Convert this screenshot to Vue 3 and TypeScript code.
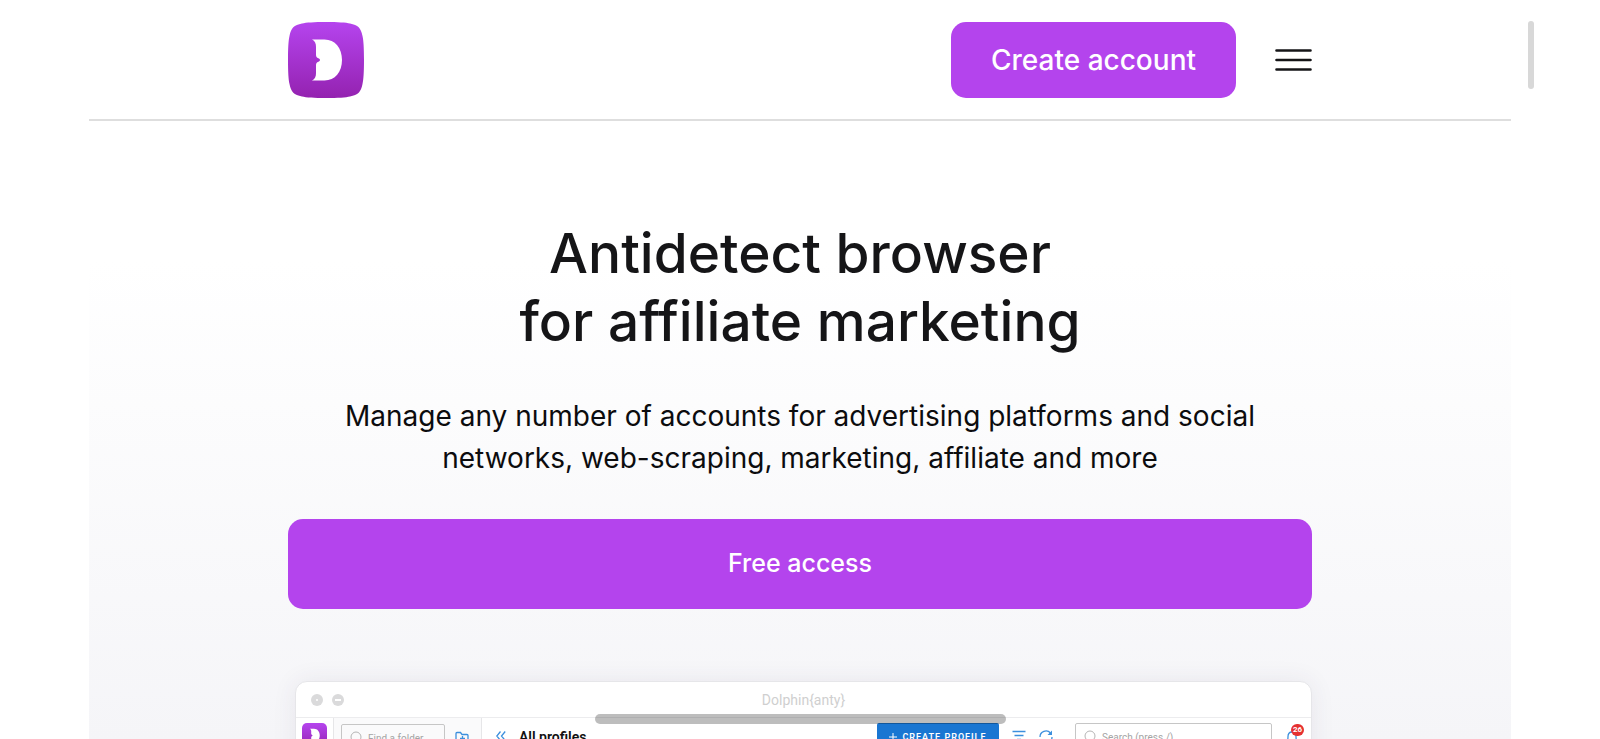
<script setup lang="ts">
const headingLines: string[] = ['Antidetect browser', 'for affiliate marketing']
const leadLines: string[] = [
  'Manage any number of accounts for advertising platforms and social',
  'networks, web-scraping, marketing, affiliate and more',
]
</script>

<template>
  <div class="page">
    <div class="sheet">
      <header class="header">
        <div class="container header-row">
          <a class="logo" href="#" aria-label="Dolphin Anty">
            <svg viewBox="0 0 76 76" aria-hidden="true">
              <defs>
                <linearGradient id="brand" x1="0" y1="0" x2="0" y2="1">
                  <stop offset="0" stop-color="#b544ee" />
                  <stop offset="1" stop-color="#9422b0" />
                </linearGradient>
              </defs>
              <path fill="url(#brand)" d="M38 0C50 0 58 .500 62 1.500C70 3 73 6 74.500 14C75.500 18 76 26 76 38S75.500 58 74.500 62C73 70 70 73 62 74.500C58 75.500 50 76 38 76S18 75.500 14 74.500C6 73 3 70 1.500 62C.500 58 0 50 0 38S.500 18 1.500 14C3 6 6 3 14 1.500C18 .500 26 0 38 0Z" />
              <path fill="#fff" d="M24 17.500H36.500C47 17.500 54 26 54 38S47 58.500 36.500 58.500H24C27 57 28 54.500 28 51V43C28 41 29 40.300 31 39.500Q33 38 31 36.500C29 35.700 28 35 28 33V25C28 21.500 27 19 24 17.500Z" />
            </svg>
          </a>
          <button class="create" type="button">Create account</button>
          <button class="burger" type="button" aria-label="Menu">
            <svg viewBox="0 0 37 24" aria-hidden="true">
              <path d="M1.500 2.500h34M1.500 12h34M1.500 21.500h34" />
            </svg>
          </button>
        </div>
      </header>

      <main class="hero">
        <div class="container">
          <h1><span v-for="line in headingLines" :key="line">{{ line }}</span></h1>
          <p class="lead"><span v-for="line in leadLines" :key="line">{{ line }}</span></p>
          <button class="free" type="button">Free access</button>

          <section class="app">
            <div class="titlebar">
              <svg class="dots" viewBox="0 0 34 12" aria-hidden="true">
                <circle cx="6" cy="6" r="6" />
                <circle cx="27" cy="6" r="6" />
                <circle class="cut" cx="6" cy="6" r="1" />
                <rect class="cut" x="24" y="5" width="6" height="2" />
              </svg>
              <span>Dolphin{anty}</span>
            </div>
            <div class="body">
              <div class="rail">
                <svg viewBox="0 0 76 76" aria-hidden="true">
                  <rect width="76" height="76" rx="15" fill="url(#brand)" />
                  <path fill="#fff" d="M24 17.500H36.500C47 17.500 54 26 54 38S47 58.500 36.500 58.500H24C27 57 28 54.500 28 51V43C28 41 29 40.300 31 39.500Q33 38 31 36.500C29 35.700 28 35 28 33V25C28 21.500 27 19 24 17.500Z" />
                </svg>
              </div>
              <div class="folders">
                <label class="field folder-field">
                  <svg viewBox="0 0 14 14" aria-hidden="true"><circle cx="6" cy="6" r="5" /><path d="M10 10l3 3" /></svg>
                  <input type="text" placeholder="Find a folder" aria-label="Find a folder" />
                </label>
                <svg class="blue folder-icon" viewBox="0 0 14 14" aria-hidden="true">
                  <path d="M1 11V2.500Q1 1.500 2 1.500H5.500L7 3.500H12Q13 3.500 13 4.500V11Q13 12 12 12H2Q1 12 1 11ZM5 7.500h5M7.500 5v5" />
                </svg>
              </div>
              <div class="toolbar">
                <svg class="blue chevrons" viewBox="0 0 10 10" aria-hidden="true"><path d="M4.500 .500L.800 5l3.700 4.500M9.200 .500L5.500 5l3.700 4.500" /></svg>
                <strong>All profiles</strong>
                <button class="profile" type="button">
                  <svg viewBox="0 0 8 8" aria-hidden="true"><path d="M4 0v8M0 4h8" /></svg>
                  CREATE PROFILE
                </button>
                <svg class="blue filter" viewBox="0 0 14 12" aria-hidden="true"><path d="M.500 1.500h13M2.500 5.500h9M5 9.500h4" /></svg>
                <svg class="blue refresh" viewBox="0 0 14 14" aria-hidden="true"><path d="M1 7A6 6 0 0 1 11.500 3M13 7A6 6 0 0 1 2.500 11" /><path class="tip" d="M13 .500V5H8.500ZM1 13.500V9H5.500Z" /></svg>
                <label class="field search-field">
                  <svg viewBox="0 0 14 14" aria-hidden="true"><circle cx="6" cy="6" r="5" /><path d="M10 10l3 3" /></svg>
                  <input type="text" placeholder="Search (press /)" aria-label="Search" />
                </label>
                <div class="bell">
                  <svg class="blue" viewBox="0 0 14 14" aria-hidden="true"><path d="M1 12.500Q3 11.500 3 6.500Q3 2 7 2T11 6.500Q11 11.500 13 12.500Z" /></svg>
                  <span class="badge">26</span>
                </div>
              </div>
            </div>
          </section>
        </div>
      </main>
    </div>
    <div class="thumb thumb-y"></div>
    <div class="thumb thumb-x"></div>
  </div>
</template>

<style>
body {
  margin: 0;
  background: #fff;
}
</style>

<style scoped>
.page {
  position: relative;
  height: 100vh;
  overflow: hidden;
  box-sizing: border-box;
  padding: 0 89px;
  background: #fff;
  color: #151517;
  font-family: Inter, "Liberation Sans", sans-serif;
}
.sheet {
  height: 100%;
  display: flex;
  flex-direction: column;
}
.container {
  max-width: 1024px;
  margin: 0 auto;
}
button {
  border: 0;
  padding: 0;
  font-family: inherit;
  cursor: pointer;
}
svg {
  display: block;
  flex: none;
}
.header {
  border-bottom: 2px solid #dedede;
  padding: 22px 0 21px;
}
.header-row {
  display: flex;
  align-items: center;
}
.logo {
  margin-right: auto;
}
.logo svg {
  width: 76px;
  height: 76px;
}
.create {
  height: 76px;
  padding: 0 40px;
  border-radius: 15px;
  background: #b444ed;
  color: #fff;
  font-size: 28px;
  font-weight: 500;
}
.burger {
  margin-left: 39px;
  background: none;
}
.burger svg {
  width: 37px;
  height: 24px;
  fill: none;
  stroke: #151517;
  stroke-width: 2.6;
  stroke-linecap: round;
}
.hero {
  flex: 1;
  min-height: 0;
  padding-top: 98px;
  background: linear-gradient(#fff 0, #fff 140px, #f5f5f8 100%);
}
h1 {
  margin: 0;
  text-align: center;
  font-size: 55px;
  line-height: 68px;
  font-weight: 500;
}
h1 span,
.lead span {
  display: block;
}
.lead {
  margin: 40px 0;
  text-align: center;
  font-size: 28px;
  line-height: 42px;
  color: #0c0c0e;
}
.free {
  display: block;
  width: 100%;
  height: 90px;
  padding-bottom: 2px;
  border-radius: 15px;
  background: #b444ed;
  color: #fff;
  font-size: 25px;
  font-weight: 500;
}
.app {
  margin: 72px 0 0 7px;
  height: 600px;
  border: 1px solid #e6e6e9;
  border-radius: 12px;
  overflow: hidden;
  background: #fff;
  box-shadow: 0 0 24px rgba(60, 50, 90, 0.08);
  font-family: Roboto, sans-serif;
}
.titlebar {
  display: grid;
  grid-template-columns: 1fr auto 1fr;
  align-items: center;
  height: 35px;
  padding: 0 15px;
  border-bottom: 1px solid #ececee;
  color: #cfcfcf;
  font-size: 14px;
}
.dots {
  width: 34px;
  height: 12px;
  fill: #dadadb;
}
.cut {
  fill: #fff;
}
.body {
  display: flex;
  height: 100%;
}
.rail {
  padding: 5px 6px;
  border-right: 1px solid #e6e6e8;
}
.rail svg {
  width: 25px;
  height: 25px;
}
.folders {
  display: flex;
  align-items: flex-start;
  gap: 10px;
  width: 148px;
  box-sizing: border-box;
  padding: 6px 7px;
  border-right: 1px solid #e6e6e8;
  background: #fafafb;
}
.field {
  display: flex;
  align-items: center;
  gap: 4px;
  height: 28px;
  box-sizing: border-box;
  padding: 0 8px;
  border: 1px solid #c6c6c6;
  border-radius: 2px;
}
.field svg {
  width: 14px;
  height: 14px;
  fill: none;
  stroke: #b4b4b4;
}
.field input {
  flex: 1;
  min-width: 0;
  padding: 0;
  border: 0;
  outline: 0;
  background: none;
  font-family: inherit;
  font-size: 10px;
}
.field input::placeholder {
  color: #a4a4a4;
  opacity: 1;
}
.folder-field {
  width: 104px;
}
.blue {
  width: 14px;
  height: 14px;
  fill: none;
  stroke: #3c8fdd;
  stroke-width: 1.3;
}
.tip {
  fill: #3c8fdd;
  stroke: none;
}
.folder-icon {
  margin-top: 7px;
}
.toolbar {
  flex: 1;
  display: flex;
  align-items: flex-start;
  padding: 5px 12px 0 14px;
}
.chevrons {
  width: 10px;
  height: 10px;
  margin: 8px 13px 0 0;
}
.toolbar strong {
  margin: 5px auto 0 0;
  font-size: 14px;
  line-height: 18px;
  font-weight: 600;
  color: #111;
}
.profile {
  display: flex;
  align-items: center;
  justify-content: center;
  gap: 5px;
  width: 122px;
  height: 28px;
  border-radius: 2px;
  background: #1976d2;
  color: #fff;
  font-size: 9px;
  font-weight: 600;
  letter-spacing: 1px;
}
.profile svg {
  width: 8px;
  height: 8px;
  stroke: #fff;
}
.filter {
  height: 12px;
  margin: 7px 0 0 13px;
}
.refresh {
  margin: 7px 0 0 13px;
}
.search-field {
  width: 197px;
  margin-left: 22px;
}
.bell {
  position: relative;
  margin: 7px 0 0 13px;
}
.badge {
  position: absolute;
  top: -6px;
  left: 6px;
  width: 13px;
  border-radius: 6px;
  background: #e53131;
  color: #fff;
  text-align: center;
  font-size: 8px;
  line-height: 12px;
  font-weight: 700;
}
.thumb {
  position: absolute;
  border-radius: 5px;
}
.thumb-y {
  top: 21px;
  right: 66px;
  width: 6px;
  height: 68px;
  background: #d8d8d8;
}
.thumb-x {
  bottom: 15px;
  left: 595px;
  width: 411px;
  height: 10px;
  background: rgba(0, 0, 0, 0.26);
}
</style>
